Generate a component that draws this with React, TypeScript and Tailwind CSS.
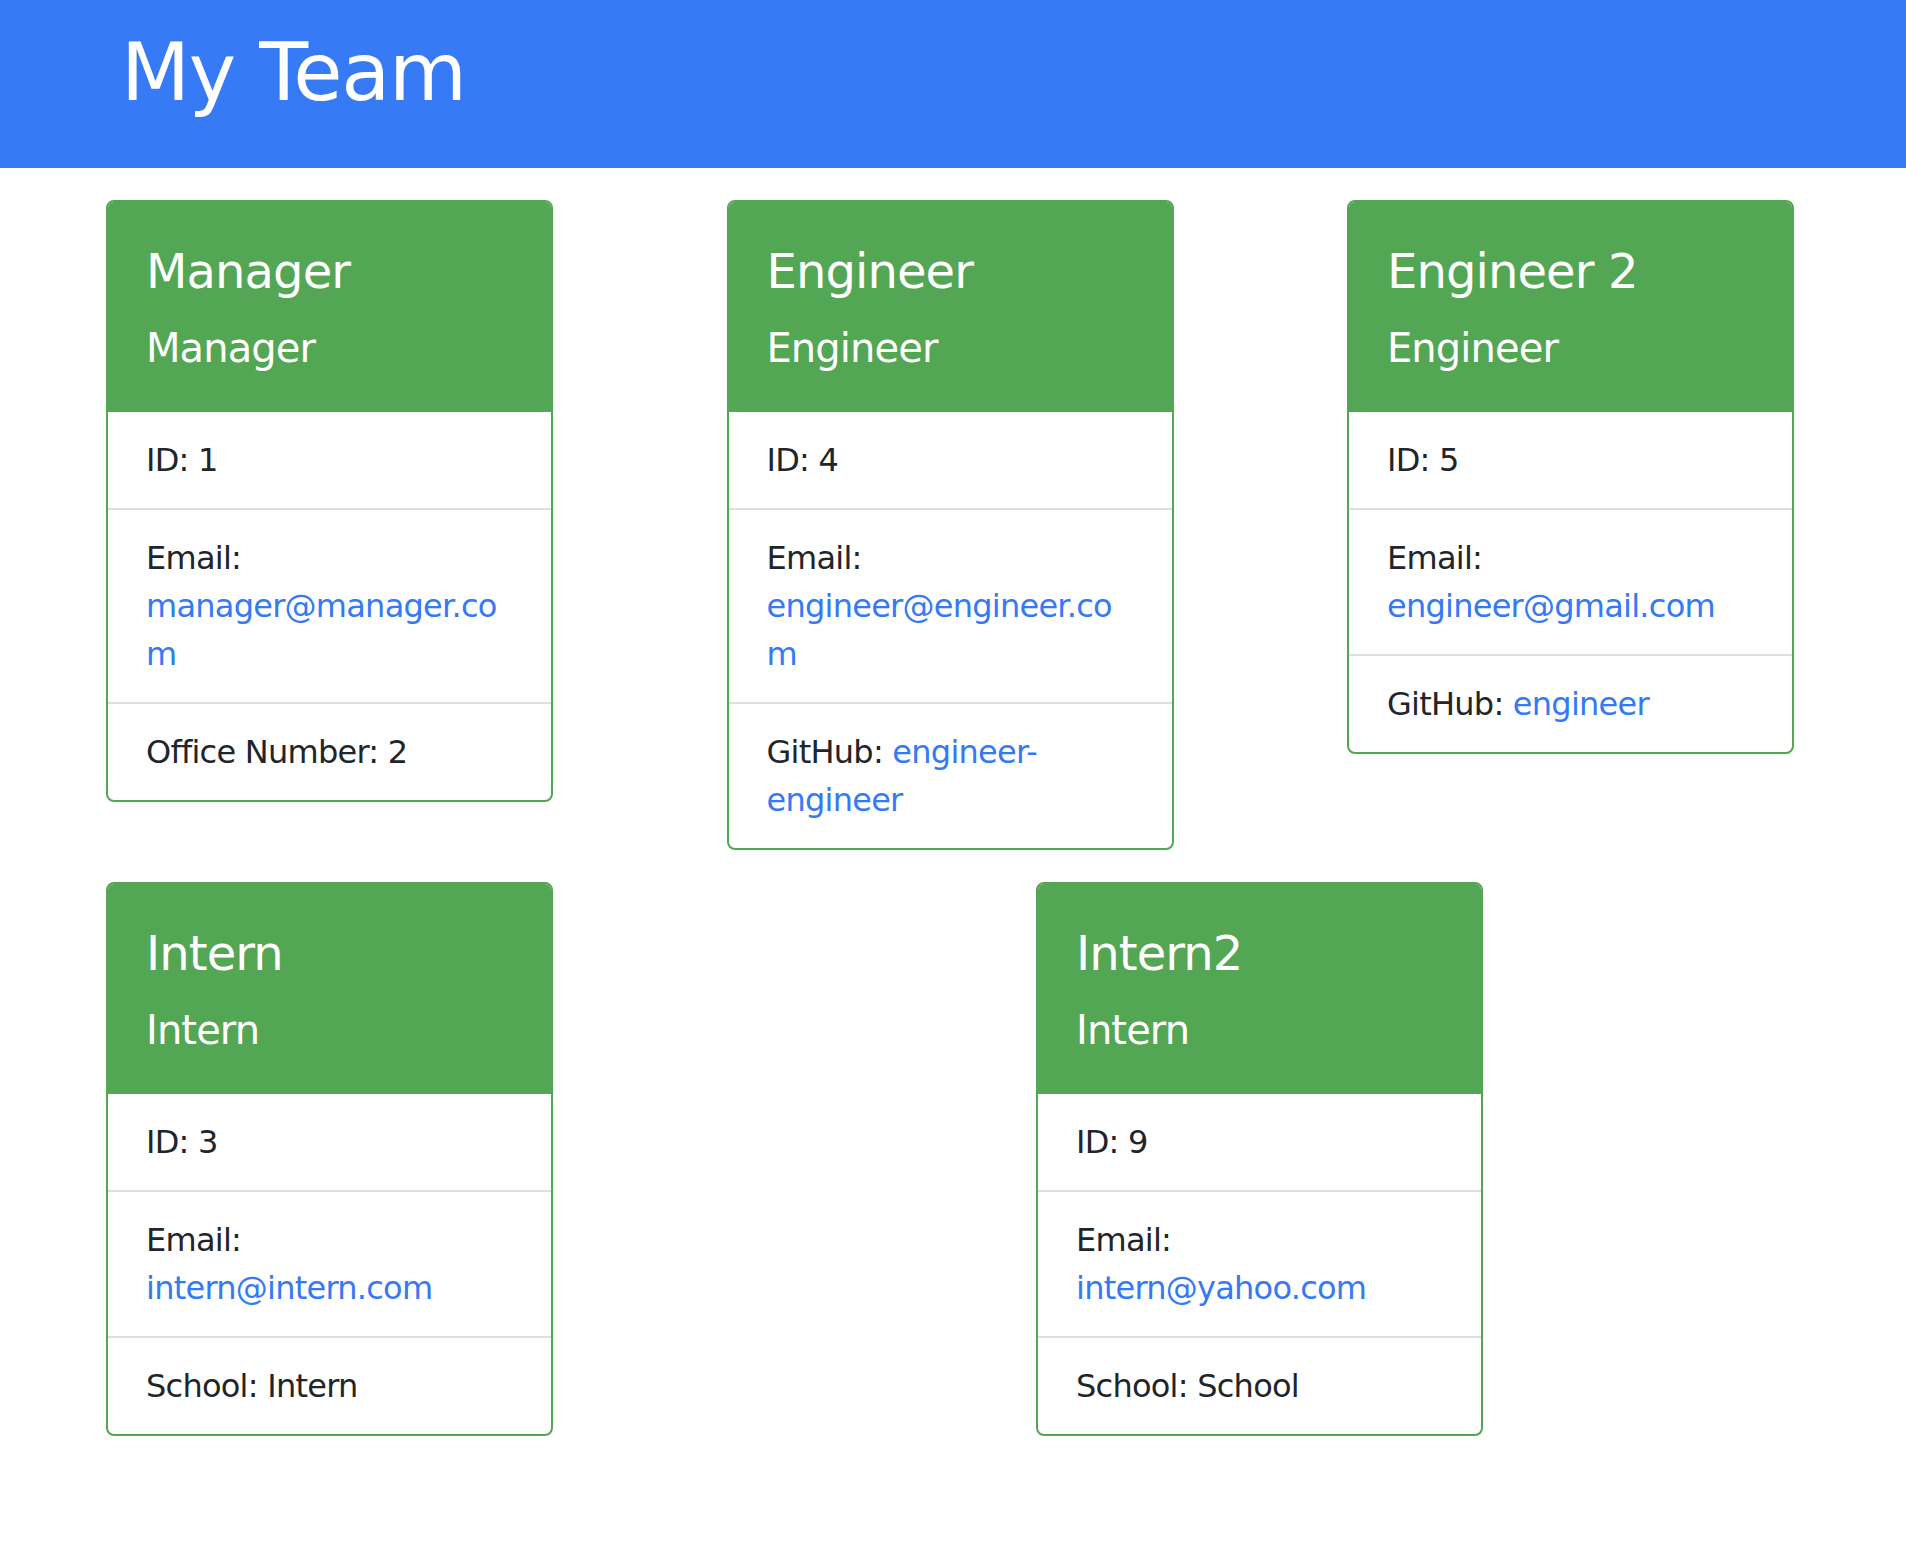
import React from 'react';

type Member = {
  name: string;
  role: string;
  id: number;
  email: string;
  extraLabel: string;
  extraValue: string;
  extraLink?: boolean;
};

const team: Member[] = [
  { name: 'Manager', role: 'Manager', id: 1, email: 'manager@manager.com', extraLabel: 'Office Number', extraValue: '2' },
  { name: 'Engineer', role: 'Engineer', id: 4, email: 'engineer@engineer.com', extraLabel: 'GitHub', extraValue: 'engineer-engineer', extraLink: true },
  { name: 'Engineer 2', role: 'Engineer', id: 5, email: 'engineer@gmail.com', extraLabel: 'GitHub', extraValue: 'engineer', extraLink: true },
  { name: 'Intern', role: 'Intern', id: 3, email: 'intern@intern.com', extraLabel: 'School', extraValue: 'Intern' },
  { name: 'Intern2', role: 'Intern', id: 9, email: 'intern@yahoo.com', extraLabel: 'School', extraValue: 'School' },
];

function MemberCard({ m }: { m: Member }) {
  return (
    <div className="w-[447px] shrink-0 self-start overflow-hidden rounded-lg border-2 border-[#53a653] bg-white">
      {/* card header */}
      <div className="bg-[#53a653] px-[38px] py-10 text-white">
        <h2 className="mb-6 text-[48px] leading-[58px] tracking-[-0.9px]">{m.name}</h2>
        <h5 className="text-[40px] leading-[48px] tracking-[-0.9px]">{m.role}</h5>
      </div>

      {/* details */}
      <ul className="text-[32px] leading-[48px] tracking-[-0.75px] text-[#212529]">
        <li className="border-b-2 border-[#dfdfdf] px-[38px] py-6">ID: {m.id}</li>
        <li className="break-words border-b-2 border-[#dfdfdf] px-[38px] py-6">
          <span>Email:</span>
          <a href="#" className="block text-[#3479f5]">{m.email}</a>
        </li>
        <li className="break-words px-[38px] py-6">
          {m.extraLabel}:{' '}
          {m.extraLink ? <a href="#" className="text-[#3479f5]">{m.extraValue}</a> : m.extraValue}
        </li>
      </ul>
    </div>
  );
}

export default function App() {
  return (
    <div className="min-h-screen bg-white font-['DejaVu_Sans',sans-serif]">
      <header className="h-[168px] bg-[#377af5] pl-[121px] pt-[25px]">
        <h1 className="text-[80px] leading-[96px] tracking-[-1.2px] text-white">My Team</h1>
      </header>

      <div className="px-[106px]">
        {/* First row */}
        <div className="mt-8 flex gap-[173.5px]">
          {team.slice(0, 3).map((m) => (
            <MemberCard key={m.id} m={m} />
          ))}
        </div>

        {/* Second row */}
        <div className="mt-8 flex gap-[483px]">
          {team.slice(3, 5).map((m) => (
            <MemberCard key={m.id} m={m} />
          ))}
        </div>
      </div>
    </div>
  );
}
